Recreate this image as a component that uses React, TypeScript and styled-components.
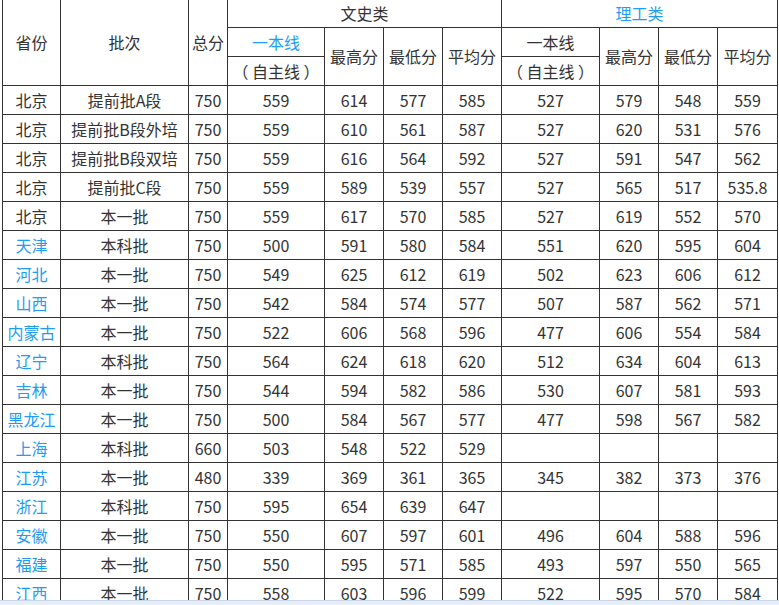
import React from 'react';
import styled, { createGlobalStyle } from 'styled-components';

const GlobalStyle = createGlobalStyle`
  html, body {
    margin: 0;
    padding: 0;
    background: #fff;
  }
  body {
    font-family: "Noto Sans CJK SC", "Microsoft YaHei", sans-serif;
    font-size: 16px;
    color: #333;
  }
`;

const Page = styled.div`
  display: flex;
  flex-direction: column;
  height: 100vh;
  overflow: hidden;
`;

const Viewport = styled.div`
  flex: 1;
  overflow: hidden;
  padding-left: 2px;
`;

const StatusStrip = styled.div`
  height: 4px;
  background: #e7eef8;
  border-top: 1px solid #c8d6ea;
`;

const Grid = styled.div`
  display: grid;
  grid-template-columns: 58px 128px 39px 97px 59px 59px 59px 98px 59px 59px 60px;
  grid-auto-rows: 29px;
  width: max-content;
  margin-top: -2px;
  border-top: 1px solid #333;
  border-left: 1px solid #333;
`;

const Cell = styled.div<{ $blue?: boolean; $col?: string; $row?: string }>`
  box-sizing: border-box;
  display: flex;
  align-items: center;
  justify-content: center;
  border-right: 1px solid #333;
  border-bottom: 1px solid #333;
  color: ${p => (p.$blue ? '#1d9df5' : '#333')};
  white-space: pre;
  line-height: 1;
  padding-bottom: 1px;
  grid-column: ${p => p.$col ?? 'auto'};
  grid-row: ${p => p.$row ?? 'auto'};
`;

type Row = [string, string, ...string[]];

const rows: Row[] = [
  ['北京', '提前批A段', '750', '559', '614', '577', '585', '527', '579', '548', '559'],
  ['北京', '提前批B段外培', '750', '559', '610', '561', '587', '527', '620', '531', '576'],
  ['北京', '提前批B段双培', '750', '559', '616', '564', '592', '527', '591', '547', '562'],
  ['北京', '提前批C段', '750', '559', '589', '539', '557', '527', '565', '517', '535.8'],
  ['北京', '本一批', '750', '559', '617', '570', '585', '527', '619', '552', '570'],
  ['天津', '本科批', '750', '500', '591', '580', '584', '551', '620', '595', '604'],
  ['河北', '本一批', '750', '549', '625', '612', '619', '502', '623', '606', '612'],
  ['山西', '本一批', '750', '542', '584', '574', '577', '507', '587', '562', '571'],
  ['内蒙古', '本一批', '750', '522', '606', '568', '596', '477', '606', '554', '584'],
  ['辽宁', '本科批', '750', '564', '624', '618', '620', '512', '634', '604', '613'],
  ['吉林', '本一批', '750', '544', '594', '582', '586', '530', '607', '581', '593'],
  ['黑龙江', '本一批', '750', '500', '584', '567', '577', '477', '598', '567', '582'],
  ['上海', '本科批', '660', '503', '548', '522', '529', '', '', '', ''],
  ['江苏', '本一批', '480', '339', '369', '361', '365', '345', '382', '373', '376'],
  ['浙江', '本科批', '750', '595', '654', '639', '647', '', '', '', ''],
  ['安徽', '本一批', '750', '550', '607', '597', '601', '496', '604', '588', '596'],
  ['福建', '本一批', '750', '550', '595', '571', '585', '493', '597', '550', '565'],
  ['江西', '本一批', '750', '558', '603', '596', '599', '522', '595', '570', '584'],
];

const Header = () => (
  <>
    <Cell $col="1" $row="1 / span 3">省份</Cell>
    <Cell $col="2" $row="1 / span 3">批次</Cell>
    <Cell $col="3" $row="1 / span 3">总分</Cell>
    <Cell $col="4 / span 4" $row="1">文史类</Cell>
    <Cell $col="8 / span 4" $row="1" $blue>理工类</Cell>

    <Cell $col="4" $row="2" $blue>一本线</Cell>
    <Cell $col="4" $row="3">（ 自主线 ）</Cell>
    <Cell $col="5" $row="2 / span 2">最高分</Cell>
    <Cell $col="6" $row="2 / span 2">最低分</Cell>
    <Cell $col="7" $row="2 / span 2">平均分</Cell>

    <Cell $col="8" $row="2">一本线</Cell>
    <Cell $col="8" $row="3">（ 自主线 ）</Cell>
    <Cell $col="9" $row="2 / span 2">最高分</Cell>
    <Cell $col="10" $row="2 / span 2">最低分</Cell>
    <Cell $col="11" $row="2 / span 2">平均分</Cell>
  </>
);

export default function App() {
  return (
    <Page>
      <GlobalStyle />
      <Viewport>
        <Grid>
          <Header />
          {rows.map((r, i) => (
            <React.Fragment key={i}>
              {r.map((v, j) => (
                <Cell key={j} $blue={j === 0 && r[0] !== '北京'}>
                  {v}
                </Cell>
              ))}
            </React.Fragment>
          ))}
        </Grid>
      </Viewport>
      <StatusStrip />
    </Page>
  );
}
